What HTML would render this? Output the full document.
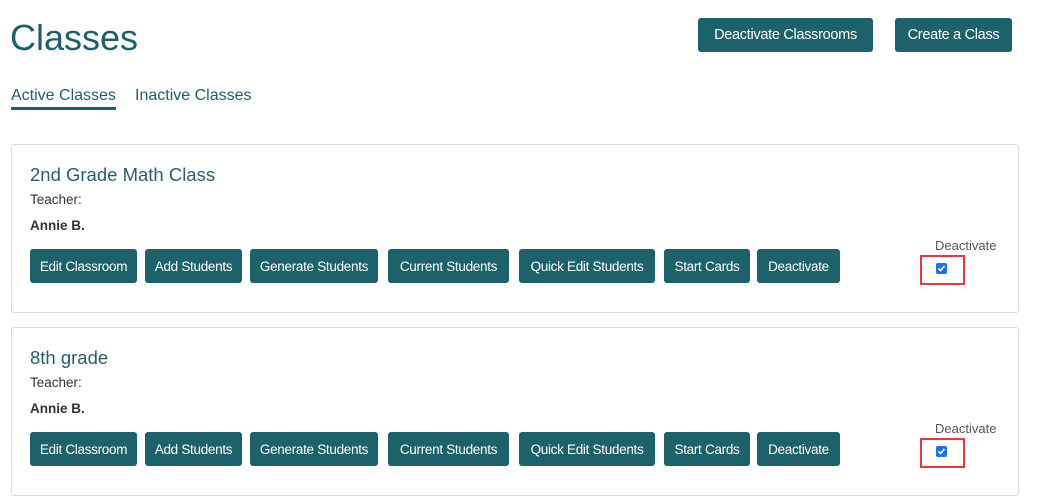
<!DOCTYPE html>
<html><head><meta charset="utf-8"><style>
*{margin:0;padding:0;box-sizing:border-box}
body{width:1040px;height:501px;background:#fff;font-family:"Liberation Sans",sans-serif;position:relative;overflow:hidden}
.a{position:absolute;white-space:nowrap}
.btn{position:absolute;background:#1d616b;color:#fff;border-radius:3px;font-size:13.5px;letter-spacing:-0.3px;display:flex;align-items:center;justify-content:center;height:34px}
.card{position:absolute;left:11px;width:1008px;height:169px;border:1px solid #ddd;border-radius:3px}
.h{color:#2a5f6e;font-size:18.5px}
.t{color:#333;font-size:13.5px}
.n{color:#333;font-size:13.5px;font-weight:bold}
.dl{color:#555;font-size:13px}
.red{position:absolute;width:45px;height:30px;border:2px solid #e8383d}
.cb{position:absolute;width:11px;height:11px;background:#1a73e8;border-radius:2px}
.cb svg{position:absolute;left:1px;top:1px}
</style></head><body>
<div class="a" style="left:10px;top:17px;font-size:36px;color:#1e5f6b">Classes</div>
<div class="btn" style="left:698px;top:18px;width:175px;height:34px;font-size:14.5px">Deactivate Classrooms</div>
<div class="btn" style="left:895px;top:18px;width:117px;height:34px;font-size:14.5px">Create a Class</div>
<div class="a" style="left:11px;top:87px;font-size:16px;color:#1e5f6b">Active Classes</div>
<div class="a" style="left:11px;top:107px;width:105px;height:3px;background:#1e5f6b"></div>
<div class="a" style="left:135px;top:87px;font-size:16px;color:#1e5f6b">Inactive Classes</div>

<div class="card" style="top:144px"></div>
<div class="a h" style="left:30px;top:164px">2nd Grade Math Class</div>
<div class="a t" style="left:30px;top:192px">Teacher:</div>
<div class="a n" style="left:30px;top:218px">Annie B.</div>
<div class="btn" style="left:30px;top:249px;width:107px">Edit Classroom</div>
<div class="btn" style="left:145px;top:249px;width:97px">Add Students</div>
<div class="btn" style="left:250px;top:249px;width:128px">Generate Students</div>
<div class="btn" style="left:388px;top:249px;width:121px">Current Students</div>
<div class="btn" style="left:519px;top:249px;width:136px">Quick Edit Students</div>
<div class="btn" style="left:664px;top:249px;width:86px">Start Cards</div>
<div class="btn" style="left:757px;top:249px;width:83px">Deactivate</div>
<div class="a dl" style="left:935px;top:238px">Deactivate</div>
<div class="red" style="left:920px;top:255px"></div>
<div class="cb" style="left:936px;top:263px"><svg width="9" height="9" viewBox="0 0 9 9"><path d="M1.5 4.5L3.5 6.5L7.5 2" stroke="#fff" stroke-width="1.6" fill="none"/></svg></div>

<div class="card" style="top:327px"></div>
<div class="a h" style="left:30px;top:347px">8th grade</div>
<div class="a t" style="left:30px;top:375px">Teacher:</div>
<div class="a n" style="left:30px;top:401px">Annie B.</div>
<div class="btn" style="left:30px;top:432px;width:107px">Edit Classroom</div>
<div class="btn" style="left:145px;top:432px;width:97px">Add Students</div>
<div class="btn" style="left:250px;top:432px;width:128px">Generate Students</div>
<div class="btn" style="left:388px;top:432px;width:121px">Current Students</div>
<div class="btn" style="left:519px;top:432px;width:136px">Quick Edit Students</div>
<div class="btn" style="left:664px;top:432px;width:86px">Start Cards</div>
<div class="btn" style="left:757px;top:432px;width:83px">Deactivate</div>
<div class="a dl" style="left:935px;top:421px">Deactivate</div>
<div class="red" style="left:920px;top:438px"></div>
<div class="cb" style="left:936px;top:446px"><svg width="9" height="9" viewBox="0 0 9 9"><path d="M1.5 4.5L3.5 6.5L7.5 2" stroke="#fff" stroke-width="1.6" fill="none"/></svg></div>
</body></html>
